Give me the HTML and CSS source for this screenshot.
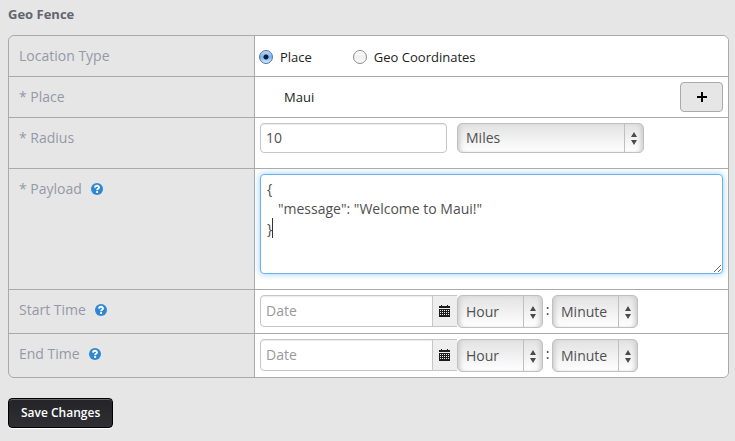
FILE: index.html
```html
<!DOCTYPE html>
<html lang="en">
<head>
<meta charset="utf-8">
<title>Geo Fence</title>
<link rel="stylesheet" href="styles.css">
</head>
<body>
<svg class="defs" aria-hidden="true">
  <symbol id="help" viewBox="0 0 12 12">
    <circle cx="6" cy="6" r="6" fill="#2e87d3"/>
    <path d="M4 4.6C4.1 2.200 8 2.200 8 4.500C8 5.900 6.100 5.700 6.100 7.200" fill="none" stroke="#fff" stroke-width="1.9"/>
    <rect x="5.1" y="8.1" width="2" height="1.8" fill="#fff"/>
  </symbol>
  <symbol id="arrows" viewBox="0 0 6 13">
    <path d="M3 0L6 5H0zM0 8H6L3 13z" fill="#4c4c4c"/>
  </symbol>
  <symbol id="calendar" viewBox="0 0 11 12">
    <path d="M0 1H2V0H3V1H8V0H9V1H11V3H0zM0 4H11V12H0z" fill="#1c1c1c"/>
    <path d="M1 5.500H10M1 7.500H10M1 9.500H10" stroke="#eee" stroke-width="1" stroke-dasharray="1 1"/>
  </symbol>
</svg>
<form>
  <h1>Geo Fence</h1>
  <div class="panel">
    <div class="row">
      <div class="label" id="type-label">Location Type</div>
      <div class="field choices" role="radiogroup" aria-labelledby="type-label">
        <label class="choice"><input type="radio" name="type" checked>Place</label>
        <label class="choice"><input type="radio" name="type">Geo Coordinates</label>
      </div>
    </div>
    <div class="row">
      <div class="label">* Place</div>
      <div class="field place">
        <span>Maui</span>
        <button type="button" class="add" aria-label="Add place"><svg viewBox="0 0 10 10" aria-hidden="true"><path d="M5 0V10M0 5H10" stroke="#000" stroke-width="2"/></svg></button>
      </div>
    </div>
    <div class="row">
      <label class="label" for="radius">* Radius</label>
      <div class="field radius">
        <input class="text" id="radius" type="text" value="10">
        <div class="select">
          <select aria-label="Radius unit"><option>Miles</option></select>
          <svg aria-hidden="true"><use href="#arrows"/></svg>
        </div>
      </div>
    </div>
    <div class="row">
      <label class="label" for="payload">* Payload<svg class="help" aria-hidden="true"><use href="#help"/></svg></label>
      <div class="field payload">
        <textarea id="payload" spellcheck="false">{
   "message": "Welcome to Maui!"
}</textarea>
        <span class="caret"></span>
      </div>
    </div>
    <div class="row">
      <label class="label" for="start">Start Time<svg class="help" aria-hidden="true"><use href="#help"/></svg></label>
      <div class="field time">
        <div class="date">
          <input class="text" id="start" type="text" placeholder="Date">
          <button type="button" class="pick" aria-label="Pick start date"><svg aria-hidden="true"><use href="#calendar"/></svg></button>
        </div>
        <div class="select short">
          <select aria-label="Start hour"><option>Hour</option></select>
          <svg aria-hidden="true"><use href="#arrows"/></svg>
        </div>
        <span class="colon">:</span>
        <div class="select short">
          <select aria-label="Start minute"><option>Minute</option></select>
          <svg aria-hidden="true"><use href="#arrows"/></svg>
        </div>
      </div>
    </div>
    <div class="row">
      <label class="label" for="end">End Time<svg class="help" aria-hidden="true"><use href="#help"/></svg></label>
      <div class="field time">
        <div class="date">
          <input class="text" id="end" type="text" placeholder="Date">
          <button type="button" class="pick" aria-label="Pick end date"><svg aria-hidden="true"><use href="#calendar"/></svg></button>
        </div>
        <div class="select short">
          <select aria-label="End hour"><option>Hour</option></select>
          <svg aria-hidden="true"><use href="#arrows"/></svg>
        </div>
        <span class="colon">:</span>
        <div class="select short">
          <select aria-label="End minute"><option>Minute</option></select>
          <svg aria-hidden="true"><use href="#arrows"/></svg>
        </div>
      </div>
    </div>
  </div>
  <button type="submit" class="save">Save Changes</button>
</form>
</body>
</html>
```
FILE: styles.css
```css
* {
  box-sizing: border-box;
}

body {
  margin: 0;
  padding: 4px 6px 12px 8px;
  background: #e6e6e6;
  color: #222;
  font: 13px/20px "Open Sans", sans-serif;
}

input,
select,
textarea,
button {
  margin: 0;
  font-family: inherit;
}

.defs {
  position: absolute;
  width: 0;
  height: 0;
}

h1 {
  margin: 0 0 11px;
  color: #62656f;
  font-size: 13px;
  line-height: 20px;
  font-weight: 700;
}

.panel {
  overflow: hidden;
  border: 1px solid #aaa;
  border-radius: 6px;
}

.row {
  display: grid;
  grid-template-columns: 246px 1fr;
}

.row + .row {
  border-top: 1px solid #aaa;
}

.label {
  padding: 10px;
  border-right: 1px solid #aaa;
  color: #9599a7;
  font-size: 14px;
  font-weight: 500;
  line-height: 20px;
}

.help {
  width: 12px;
  height: 12px;
  margin-left: 9px;
  vertical-align: -1px;
}

.field {
  display: flex;
  align-items: flex-start;
  padding: 5px;
  background: #fff;
}

.choices {
  gap: 41px;
  padding: 11px 4px 9px;
}

.choice {
  display: flex;
  align-items: center;
  gap: 7px;
}

.choice input {
  appearance: none;
  width: 14px;
  height: 14px;
  border: 1px solid #8d8d8d;
  border-radius: 50%;
  background: linear-gradient(#fff, #eee 50%, #fff);
}

.choice input:checked {
  border-color: #5b6da0;
  background: radial-gradient(circle, #0b1c3d 2px, transparent 3px), linear-gradient(#c3dbf5, #79b2ee 50%, #c9f0ff);
}

.place {
  justify-content: space-between;
  padding-left: 29px;
}

.place span {
  line-height: 20px;
  padding-top: 5px;
}

.add {
  display: flex;
  align-items: center;
  justify-content: center;
  width: 43px;
  height: 30px;
  padding: 0;
  border: 1px solid #aaa;
  border-radius: 4px;
  background: #e6e6e6;
}

.add svg {
  width: 10px;
  height: 10px;
}

.text {
  width: 187px;
  height: 30px;
  padding: 3px 5px 5px;
  border: 1px solid #c6c6c6;
  border-radius: 4px;
  background: #fff;
  box-shadow: inset 0 1px 1px #ececec;
  color: #505050;
  font-size: 14px;
  font-weight: 500;
  line-height: 20px;
}

.text::placeholder {
  color: #999;
  opacity: 1;
}

.radius {
  gap: 10px;
  padding-bottom: 15px;
}

.select {
  position: relative;
  width: 187px;
}

.select select {
  appearance: none;
  display: block;
  width: 100%;
  height: 30px;
  padding: 0 28px 0 8px;
  border: 1px solid #c0c0c0;
  border-radius: 5px;
  background: linear-gradient(#e2e2e2, #fff);
  box-shadow: inset 4px 0 4px -2px #ccc, inset -4px 0 4px -2px #ccc;
  color: #505050;
  font-size: 14px;
  font-weight: 500;
  line-height: 20px;
}

.select::after {
  content: "";
  position: absolute;
  top: 1px;
  right: 19px;
  bottom: 1px;
  border-left: 1px solid #c0c0c0;
}

.select svg {
  position: absolute;
  top: 50%;
  right: 7px;
  width: 6px;
  height: 13px;
  margin-top: -6px;
  pointer-events: none;
}

.short {
  width: 86px;
}

.short select {
  height: 33px;
}

.payload {
  position: relative;
  padding-bottom: 15px;
}

textarea {
  display: block;
  width: 100%;
  height: 100px;
  padding: 4px 6px;
  border: 1px solid #6eb1ea;
  border-radius: 4px;
  outline: 0;
  background: #fff;
  box-shadow: 0 0 7px #9dcff5;
  color: #505050;
  font-size: 14px;
  font-weight: 500;
  line-height: 20px;
}

.caret {
  position: absolute;
  top: 49px;
  left: 17px;
  width: 1px;
  height: 20px;
  background: #333;
}

.time {
  padding-bottom: 5px;
}

.date {
  display: flex;
}

.date .text {
  width: 173px;
  height: 32px;
  border-radius: 4px 0 0 4px;
}

.pick {
  display: flex;
  align-items: center;
  justify-content: center;
  width: 25px;
  height: 32px;
  margin-left: -1px;
  padding: 0 1px 0 0;
  border: 1px solid #c6c6c6;
  border-right: 0;
  background: #eee;
}

.pick svg {
  width: 11px;
  height: 12px;
}

.colon {
  width: 9px;
  color: #334;
  font-size: 14px;
  line-height: 30px;
  text-align: center;
}

.save {
  display: block;
  height: 30px;
  margin-top: 20px;
  padding: 0 12px;
  border: 1px solid #000;
  border-radius: 4px;
  background: linear-gradient(#242428, #2f2f34);
  box-shadow: inset 0 1px #66666a, 0 1px 1px #fff;
  color: #fff;
  font-size: 12px;
  font-weight: 600;
  line-height: 20px;
}
```
